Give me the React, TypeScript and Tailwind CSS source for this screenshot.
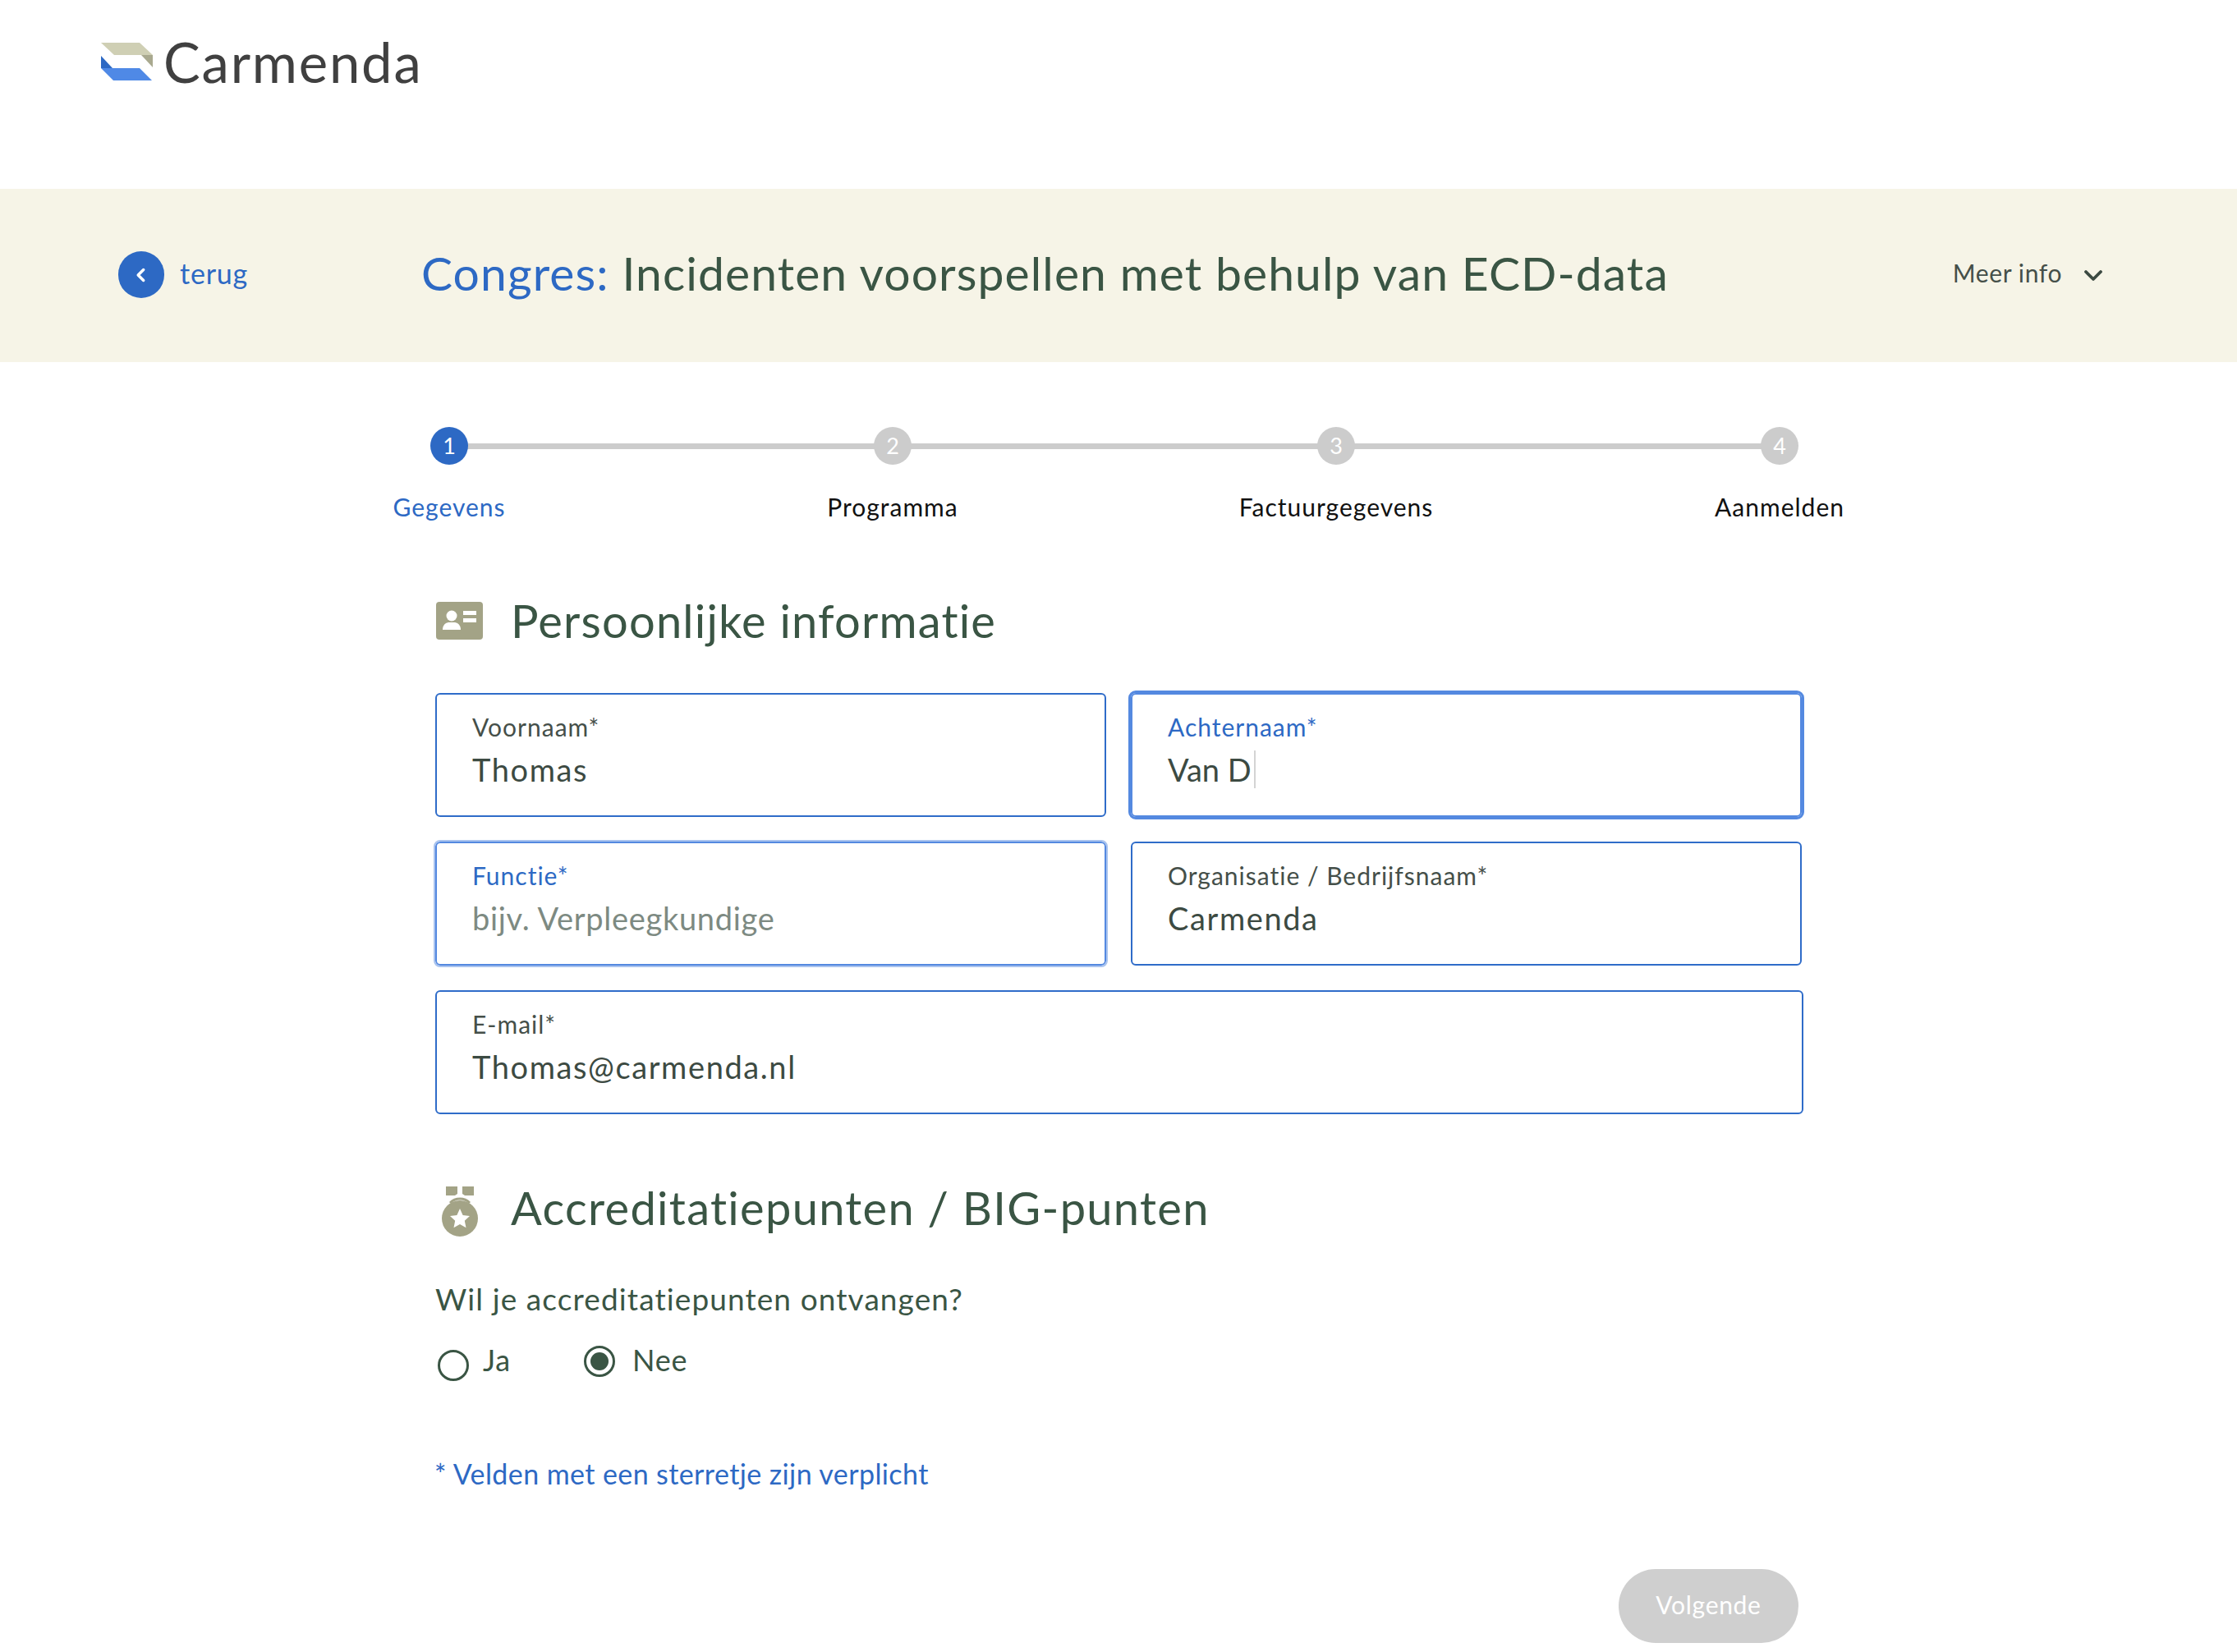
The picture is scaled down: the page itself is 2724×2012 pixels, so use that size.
import React from "react";

const font = "font-['Lato','Liberation_Sans',sans-serif]";

function Logo() {
  return (
    <svg width="66" height="50" viewBox="0 0 66 50" className="shrink-0">
      <polygon points="1,2 48,2 64,17 17,17" fill="#cfcfb4" />
      <polygon points="50,17 64,17 64,32" fill="#a9a98f" />
      <polygon points="1,18 1,33 15,33" fill="#2d69c4" />
      <polygon points="1,33 48,33 63,48 16,48" fill="#4f89e6" />
    </svg>
  );
}

function IdCard() {
  return (
    <svg width="58" height="46" viewBox="0 0 58 46" className="shrink-0">
      <rect x="0" y="0" width="57" height="46" rx="4" fill="#a3a386" />
      <circle cx="19" cy="17" r="6.5" fill="#fff" />
      <path d="M8 34c0-6 4-9 8-9h6c4 0 8 3 8 9z" fill="#fff" />
      <rect x="33" y="11" width="16" height="5" fill="#fff" />
      <rect x="33" y="20" width="16" height="5" fill="#fff" />
    </svg>
  );
}

function Medal() {
  return (
    <svg width="46" height="62" viewBox="0 0 46 62" className="shrink-0">
      <path d="M6 0h14v9l-3 2H6z" fill="#a3a386" />
      <path d="M26 0h14v11H29l-3-2z" fill="#a3a386" />
      <path d="M11 20a17 17 0 0 1 24 0" fill="none" stroke="#a3a386" strokeWidth="3" />
      <circle cx="23" cy="39" r="22" fill="#a3a386" />
      <polygon points="23,27 26.6,35 35,36 28.8,41.8 30.5,50.2 23,46 15.5,50.2 17.2,41.8 11,36 19.4,35" fill="#fff" />
    </svg>
  );
}

function Field({ label, value, active, focus, placeholder, caret, soft, wide }: { label: string; value: string; active?: boolean; focus?: boolean; placeholder?: boolean; caret?: boolean; soft?: boolean; wide?: boolean }) {
  const box = focus
    ? "border-[#5489e0] outline-[3px] outline-[#5489e0]"
    : soft
      ? "border-[#5489e0] outline-2 outline-[#a9c3ee]"
      : "border-[#2f6cc9]";
  const spacing = caret ? "tracking-[0px]" : placeholder ? "tracking-[0.7px]" : "tracking-[1.6px]";
  return (
    <div className={`h-[151px] rounded-[6px] border-2 bg-white pl-[43px] pt-[23px] ${box} ${wide ? "col-span-2 w-[1666px]" : ""}`}>
      <div className={`h-[32px] text-[30px] leading-[32px] tracking-[1px] ${active ? "text-[#2d69c4]" : "text-[#454f49]"}`}>{label}</div>
      <div className={`mt-[10px] flex h-[52px] items-center text-[38px] ${spacing} ${placeholder ? "text-[#7d8a82]" : "text-[#3c4a42]"}`}>
        {value}
        {caret && <span className="ml-[3px] h-[46px] w-[2px] bg-[#d4d4d4]" />}
      </div>
    </div>
  );
}

function Step({ n, label, active }: { n: number; label: string; active?: boolean }) {
  return (
    <div className="relative flex flex-col items-center">
      <div className={`flex h-[46px] w-[46px] items-center justify-center rounded-full text-[27px] ${active ? "bg-[#2d69c4] text-white" : "bg-[#cccccc] text-white"}`}>{n}</div>
      <div className={`mt-[31px] text-[30px] leading-[40px] tracking-[1px] ${active ? "text-[#2d69c4]" : "text-[#111111]"}`}>{label}</div>
    </div>
  );
}

export default function App() {
  return (
    <div className={`${font} h-[2012px] w-full overflow-hidden bg-white`}>
      <header className="flex h-[230px] items-start pl-[122px] pt-[50px]">
        <Logo />
        <span className="ml-[11px] -mt-[4px] text-[67px] font-normal leading-[58px] tracking-[1.8px] text-[#404040]">Carmenda</span>
      </header>

      <div className="flex h-[211px] items-center bg-[#f6f4e7] pl-[144px] pr-[162px]">
        <div className="mb-[2px] flex h-[57px] w-[56px] items-center justify-center rounded-full bg-[#2d69c4]">
          <svg width="26" height="26" viewBox="0 0 24 24" fill="none" stroke="#fff" strokeWidth="3.2" strokeLinecap="round" strokeLinejoin="round">
            <path d="M14.5 6l-6 6 6 6" />
          </svg>
        </div>
        <span className="mb-[6px] ml-[19px] w-[294px] text-[34px] tracking-[0.8px] text-[#2d69c4]">terug</span>
        <h1 className="mb-[6px] flex-1 text-[57px] font-normal tracking-[1.1px] text-[#3a5544]">
          <span className="text-[#2d69c4]">Congres:</span> Incidenten voorspellen met behulp van ECD-data
        </h1>
        <span className="mb-[6px] text-[30px] tracking-[0.6px] text-[#454f49]">Meer info</span>
        <svg className="mb-[2px] ml-[25px]" width="26" height="16" viewBox="0 0 26 16" fill="none" stroke="#3c4a42" strokeWidth="3.8" strokeLinecap="round" strokeLinejoin="round">
          <path d="M4 4l9 9 9-9" />
        </svg>
      </div>

      <div className="relative mx-[277px] mt-[79px] grid w-[2160px] grid-cols-4">
        <div className="absolute left-[270px] top-[20px] h-[7px] w-[1620px] bg-[#cccccc]" />
        <Step n={1} label="Gegevens" active />
        <Step n={2} label="Programma" />
        <Step n={3} label="Factuurgegevens" />
        <Step n={4} label="Aanmelden" />
      </div>

      <main className="ml-[530px] w-[1666px]">
        <section className="mt-[86px] flex h-[66px] items-center">
          <div className="ml-[1px]"><IdCard /></div>
          <h2 className="ml-[33px] text-[56px] font-normal tracking-[1.2px] text-[#3a5544]">Persoonlijke informatie</h2>
        </section>

        <div className="mt-[55px] grid grid-cols-[817px_817px] gap-x-[30px] gap-y-[30px]">
          <Field label="Voornaam*" value="Thomas" />
          <Field label="Achternaam*" value="Van D" active focus caret />
          <Field label="Functie*" value="bijv. Verpleegkundige" active placeholder soft />
          <Field label="Organisatie / Bedrijfsnaam*" value="Carmenda" />
          <Field label="E-mail*" value="Thomas@carmenda.nl" wide />
        </div>

        <section className="mt-[81px] flex h-[66px] items-center">
          <div className="ml-[7px] mt-[10px]"><Medal /></div>
          <h2 className="ml-[39px] text-[56px] font-normal tracking-[1.3px] text-[#3a5544]">Accreditatiepunten / BIG-punten</h2>
        </section>

        <p className="mt-[54px] text-[37px] leading-[48px] tracking-[1.1px] text-[#3a5544]">Wil je accreditatiepunten ontvangen?</p>

        <div className="mt-[26px] flex items-start text-[36px] leading-[48px] tracking-[0.8px] text-[#3a5544]">
          <span className="ml-[3px] mt-[12px] h-[38px] w-[38px] rounded-full border-[3px] border-[#3a5544]" />
          <span className="ml-[17px] w-[123px]">Ja</span>
          <span className="mt-[7px] flex h-[38px] w-[38px] items-center justify-center rounded-full border-[3px] border-[#3a5544]">
            <span className="h-[22px] w-[22px] rounded-full bg-[#3a5544]" />
          </span>
          <span className="ml-[21px]">Nee</span>
        </div>

        <p className="-ml-[1px] mt-[90px] text-[34px] leading-[46px] tracking-[0.4px] text-[#2d69c4]">* Velden met een sterretje zijn verplicht</p>

        <div className="mt-[93px] flex justify-end pr-[6px]">
          <button className="h-[90px] w-[219px] rounded-full bg-[#cfcfcf] pb-[3px] text-[30px] tracking-[0.7px] text-white">Volgende</button>
        </div>
      </main>
    </div>
  );
}
